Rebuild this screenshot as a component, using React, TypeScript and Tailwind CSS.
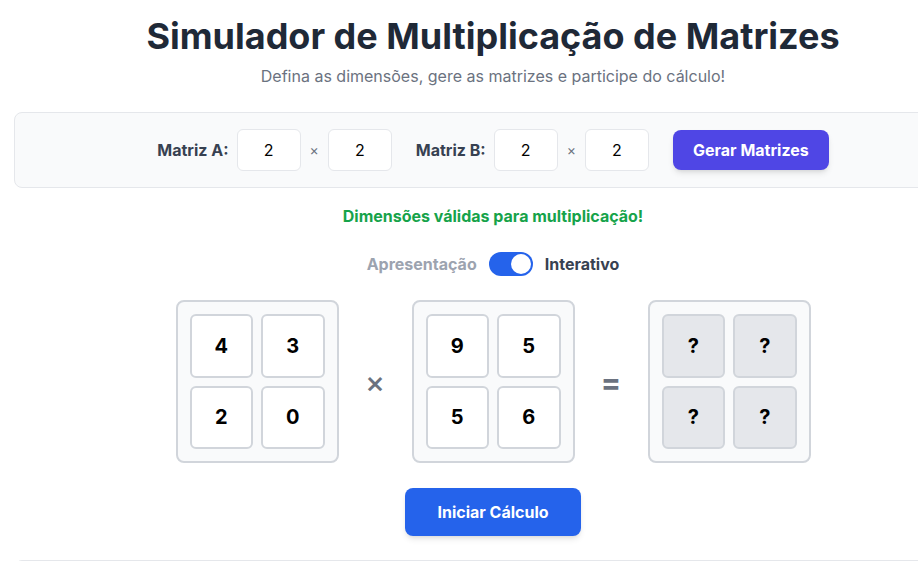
import React from "react";

const A = [
  [4, 3],
  [2, 0],
];
const B = [
  [9, 5],
  [5, 6],
];

function Matrix({ data, result }: { data: (number | string)[][]; result?: boolean }) {
  return (
    <div className="rounded-lg border-2 border-[#d1d5db] bg-[#f9fafb] p-3">
      <div className="grid grid-cols-2 gap-2">
        {data.flat().map((v, i) => (
          <div
            key={i}
            className={`flex h-[63.5px] w-[63.5px] items-center justify-center rounded-md border-2 border-[#d1d5db] text-xl font-bold text-black ${
              result ? "bg-[#e5e7eb]" : "bg-white"
            }`}
          >
            {v}
          </div>
        ))}
      </div>
    </div>
  );
}

function DimInput({ value }: { value: string }) {
  return (
    <div className="flex h-[42px] w-16 items-center justify-center rounded-md border border-[#e5e7eb] bg-white text-base text-black">
      {value}
    </div>
  );
}

export default function App() {
  return (
    <div
      className="h-[561px] w-[918px] overflow-hidden bg-white"
      style={{ fontFamily: "Inter, 'Noto Sans', sans-serif" }}
    >
      <div className="ml-[14px] flex w-[958px] flex-col items-center pt-4">
        <h1 className="mb-2 text-4xl font-bold leading-10 text-[#1f2937]">
          Simulador de Multiplicação de Matrizes
        </h1>
        <p className="mb-6 text-base leading-6 text-[#6b7280]">
          Defina as dimensões, gere as matrizes e participe do cálculo!
        </p>

        <div className="mb-4 flex w-full items-center justify-center gap-6 rounded-lg border border-[#e5e7eb] bg-[#f9fafb] p-4">
          <div className="flex items-center gap-2">
            <span className="text-base font-bold text-[#374151]">Matriz A:</span>
            <DimInput value="2" />
            <span className="px-[1px] text-sm text-[#6b7280]">×</span>
            <DimInput value="2" />
          </div>
          <div className="flex items-center gap-2">
            <span className="text-base font-bold text-[#374151]">Matriz B:</span>
            <DimInput value="2" />
            <span className="px-[1px] text-sm text-[#6b7280]">×</span>
            <DimInput value="2" />
          </div>
          <button className="h-10 rounded-lg bg-[#4f46e5] px-5 text-base font-bold text-white shadow-md">
            Gerar Matrizes
          </button>
        </div>

        <p className="mb-6 text-base font-bold leading-6 text-[#16a34a]">
          Dimensões válidas para multiplicação!
        </p>

        <div className="mb-6 flex items-center gap-3">
          <span className="text-base font-bold text-[#9ca3af]">Apresentação</span>
          <div className="flex h-6 w-11 items-center justify-end rounded-full bg-[#2563eb] px-[2px]">
            <div className="h-5 w-5 rounded-full bg-white" />
          </div>
          <span className="text-base font-bold text-[#374151]">Interativo</span>
        </div>

        <div className="mb-[25px] flex items-center gap-6">
          <Matrix data={A} />
          <span className="w-[25px] text-center text-3xl font-medium text-[#6b7280]">×</span>
          <Matrix data={B} />
          <span className="w-[25px] text-center text-3xl font-bold text-[#6b7280]">=</span>
          <Matrix
            data={[
              ["?", "?"],
              ["?", "?"],
            ]}
            result
          />
        </div>

        <button className="rounded-lg bg-[#2563eb] px-8 py-3 text-base font-bold leading-6 text-white shadow-md">
          Iniciar Cálculo
        </button>

        <div className="mt-6 h-10 w-full rounded-lg border border-[#e5e7eb]" />
      </div>
    </div>
  );
}
